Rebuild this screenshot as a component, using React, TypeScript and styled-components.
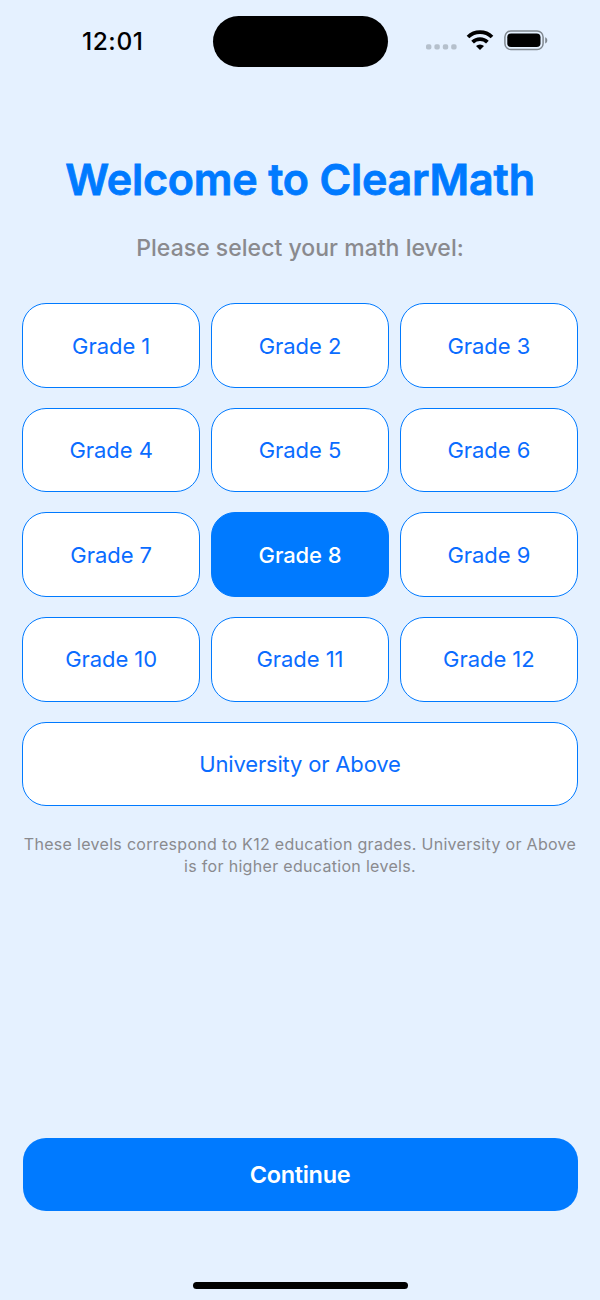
import React, { useState } from "react";
import styled, { createGlobalStyle } from "styled-components";

const BLUE = "#007aff";

const GlobalStyle = createGlobalStyle`
  * { box-sizing: border-box; }
  body { margin: 0; background: #e5f1ff; }
`;

const Screen = styled.main`
  display: flex;
  flex-direction: column;
  width: 600px;
  height: 1300px;
  padding: 0 22px;
  overflow: hidden;
  background: #e5f1ff;
  font-family: Inter, "Liberation Sans", sans-serif;
`;

const StatusBar = styled.header`
  display: grid;
  grid-template-columns: 1fr 175px 1fr;
  align-items: center;
  height: 52px;
  margin-top: 15px;
`;

const Clock = styled.time`
  justify-self: center;
  margin-right: 9px;
  padding-bottom: 1px;
  font-size: 24.5px;
  font-weight: 500;
  line-height: 30px;
  letter-spacing: 0.6px;
  color: #000;
`;

const Island = styled.div`
  height: 51px;
  margin-top: 1px;
  border-radius: 26px;
  background: #000;
`;

const StatusIcons = styled.div`
  display: flex;
  align-items: flex-start;
  gap: 9.5px;
  height: 22px;
  padding-left: 38px;
`;

const Title = styled.h1`
  margin: 85px 0 0;
  height: 54px;
  line-height: 54px;
  font-size: 43px;
  font-weight: 600;
  letter-spacing: -0.2px;
  text-align: center;
  white-space: nowrap;
  color: ${BLUE};
  -webkit-text-stroke: 0.8px ${BLUE};
  stroke-linejoin: round;
`;

const Subtitle = styled.p`
  margin: 27px 0 0;
  height: 30px;
  line-height: 30px;
  font-size: 23px;
  font-weight: 500;
  letter-spacing: 0.03px;
  text-align: center;
  white-space: nowrap;
  color: #8a8a8e;
`;

const LevelGrid = styled.div`
  display: grid;
  grid-template-columns: repeat(3, 1fr);
  grid-auto-rows: 84.6px;
  gap: 20px 10.6px;
  margin-top: 40.3px;
`;

const LevelButton = styled.button<{ $selected: boolean; $wide?: boolean }>`
  grid-column: ${(p) => (p.$wide ? "1 / -1" : "auto")};
  padding: 0;
  border: 1px solid ${BLUE};
  border-radius: 24px;
  background: ${(p) => (p.$selected ? BLUE : "#fff")};
  color: ${(p) => (p.$selected ? "#fff" : "#0a6cff")};
  font-family: inherit;
  font-size: 22px;
  line-height: 28px;
  font-weight: ${(p) => (p.$selected ? 500 : 400)};
  letter-spacing: ${(p) => (p.$wide ? "-0.18px" : p.$selected ? "-0.1px" : "-0.05px")};
  cursor: pointer;
`;

const Note = styled.p`
  margin: 26.7px -10px 0;
  font-size: 16px;
  line-height: 22.5px;
  letter-spacing: 0.31px;
  text-align: center;
  color: #8a8a8e;
`;

const Continue = styled.button`
  height: 73px;
  margin: auto 0.5px 71px;
  border: 0;
  border-radius: 23px;
  background: ${BLUE};
  color: #fff;
  font-family: inherit;
  font-size: 23.5px;
  font-weight: 600;
  letter-spacing: -0.3px;
  cursor: pointer;
`;

const HomeIndicator = styled.div`
  flex: none;
  align-self: center;
  width: 215px;
  height: 7px;
  margin-bottom: 11px;
  border-radius: 4px;
  background: #000;
`;

const grades = Array.from({ length: 12 }, (_, i) => `Grade ${i + 1}`);
const university = "University or Above";

function SignalDots() {
  return (
    <svg width="31" height="22" viewBox="0 0 31 22" fill="#b5c0cc">
      {[0, 8.4, 16.8, 25.2].map((x) => (
        <rect key={x} x={x} y="14.2" width="5.4" height="5.4" rx="1.8" />
      ))}
    </svg>
  );
}

function Wifi() {
  return (
    <svg width="28" height="22" viewBox="0 0 28 22" fill="none" stroke="#000">
      <path d="M2 7A17.2 17.2 0 0 1 26 7" strokeWidth="3.8" />
      <path d="M6.6 12.1A10.6 10.6 0 0 1 21.4 12.1" strokeWidth="3.8" />
      <path d="M14 20L10 16A5.8 5.8 0 0 1 18 16Z" fill="#000" stroke="none" />
    </svg>
  );
}

function Battery() {
  return (
    <svg width="44" height="22" viewBox="0 0 44 22">
      <rect x="0.9" y="0.9" width="38.2" height="18.6" rx="6" fill="none" stroke="#808890" strokeWidth="1.5" />
      <rect x="3.3" y="3.5" width="33.2" height="13.6" rx="3.8" fill="#000" />
      <path d="M41.2 7.2c2.8 1 2.8 5.2 0 6.2z" fill="#808890" />
    </svg>
  );
}

export default function App() {
  const [level, setLevel] = useState("Grade 8");
  return (
    <>
      <GlobalStyle />
      <Screen>
        <StatusBar>
          <Clock>12:01</Clock>
          <Island />
          <StatusIcons>
            <SignalDots />
            <Wifi />
            <Battery />
          </StatusIcons>
        </StatusBar>
        <Title>Welcome to ClearMath</Title>
        <Subtitle>Please select your math level:</Subtitle>
        <LevelGrid>
          {grades.map((g) => (
            <LevelButton key={g} $selected={g === level} onClick={() => setLevel(g)}>
              {g}
            </LevelButton>
          ))}
          <LevelButton $wide $selected={level === university} onClick={() => setLevel(university)}>
            {university}
          </LevelButton>
        </LevelGrid>
        <Note>
          These levels correspond to K12 education grades. University or Above
          <br />
          is for higher education levels.
        </Note>
        <Continue>Continue</Continue>
        <HomeIndicator />
      </Screen>
    </>
  );
}
